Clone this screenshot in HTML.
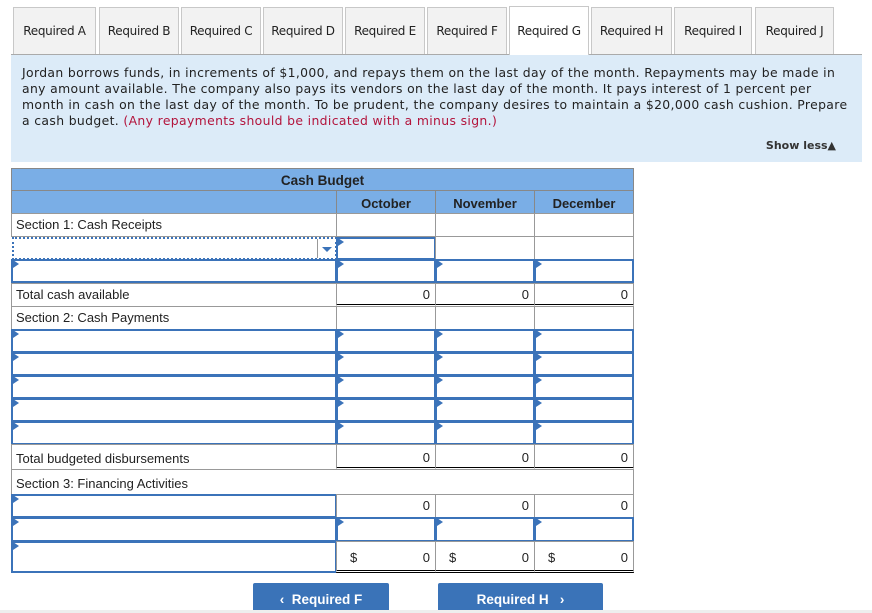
<!DOCTYPE html>
<html><head><style>
body{margin:0;width:872px;height:613px;background:#fff;font-family:"Liberation Sans",Arial,sans-serif;position:relative;overflow:hidden}
.tab{position:absolute;top:7px;height:47px;background:#f2f2f2;border:1px solid #c8c8c8;border-bottom:none;box-sizing:border-box;font-family:"DejaVu Sans",Verdana,sans-serif;font-size:12px;color:#222;display:flex;align-items:center;justify-content:center;letter-spacing:-0.3px}
.tab.act{background:#fff;top:6px;height:49px;z-index:2}
.tabline{position:absolute;left:11px;top:54px;width:851px;height:1px;background:#aaa}
.info{position:absolute;left:11px;top:55px;width:851px;height:107px;background:#dcebf8;box-sizing:border-box;padding:10px 10px 10px 11px;font-family:"DejaVu Sans",Verdana,sans-serif;font-size:12.4px;letter-spacing:0.36px;line-height:16px;color:#222}
.info .red{color:#b3143c}
.show{position:absolute;right:36px;top:139px;font-family:"DejaVu Sans",Verdana,sans-serif;font-size:11px;font-weight:bold;color:#333}
.c{position:absolute;box-sizing:border-box;font-size:13px;color:#222}
.hd{background:#7aaee6;border:1px solid #888}
.g{border:1px solid #999;background:#fff}
.in{border:2px solid #3b73b9;background:#fff}
.in:before{content:"";position:absolute;left:0;top:0;border-left:6px solid #3b73b9;border-top:4px solid transparent;border-bottom:4px solid transparent;margin-top:-1px}
.lbl{padding:3px 4px}
.num{text-align:right;padding:3px 5px}
.dbl{border-bottom:3px double #000}
.btn{position:absolute;top:583px;height:30px;background:#3a73b8;color:#fff;font-weight:bold;font-size:13.5px;border-radius:2px 2px 0 0;display:flex;align-items:center;justify-content:center;padding-top:3px;box-sizing:border-box}
</style></head><body>
<div class="tab" style="left:13px;width:83px">Required A</div>
<div class="tab" style="left:99px;width:80px">Required B</div>
<div class="tab" style="left:181px;width:80px">Required C</div>
<div class="tab" style="left:263px;width:80px">Required D</div>
<div class="tab" style="left:345px;width:80px">Required E</div>
<div class="tab" style="left:427px;width:80px">Required F</div>
<div class="tab act" style="left:509px;width:80px">Required G</div>
<div class="tab" style="left:591px;width:81px">Required H</div>
<div class="tab" style="left:674px;width:78px">Required I</div>
<div class="tab" style="left:755px;width:79px">Required J</div>
<div class="tabline"></div>
<div class="info">Jordan borrows funds, in increments of $1,000, and repays them on the last day of the month. Repayments may be made in any amount available. The company also pays its vendors on the last day of the month. It pays interest of 1 percent per month in cash on the last day of the month. To be prudent, the company desires to maintain a $20,000 cash cushion. Prepare a cash budget. <span class="red">(Any repayments should be indicated with a minus sign.)</span></div>
<div class="show">Show less▲</div>

<div class="c hd" style="left:11px;top:168px;width:623px;height:23px;text-align:center;font-weight:bold;padding-top:4px;font-size:13.5px">Cash Budget</div>
<div class="c hd" style="left:11px;top:190px;width:326px;height:24px"></div>
<div class="c hd" style="left:336px;top:190px;width:100px;height:24px;text-align:center;font-weight:bold;padding-top:5px">October</div>
<div class="c hd" style="left:435px;top:190px;width:100px;height:24px;text-align:center;font-weight:bold;padding-top:5px">November</div>
<div class="c hd" style="left:534px;top:190px;width:100px;height:24px;text-align:center;font-weight:bold;padding-top:5px">December</div>

<div class="c g lbl" style="left:11px;top:213px;width:326px;height:24px">Section 1: Cash Receipts</div>
<div class="c g" style="left:336px;top:213px;width:100px;height:24px"></div><div class="c g" style="left:435px;top:213px;width:100px;height:24px"></div><div class="c g" style="left:534px;top:213px;width:100px;height:24px"></div>

<div class="c" style="left:12px;top:237px;width:325px;height:23px;border:2px dotted #3b73b9"><div style="position:absolute;right:0;top:0;width:17px;height:19px;border-left:1px solid #999"><div style="position:absolute;left:4px;top:8px;border-top:5px solid #3b73b9;border-left:5px solid transparent;border-right:5px solid transparent"></div></div></div>
<div class="c in" style="left:336px;top:237px;width:100px;height:23px"></div><div class="c g" style="left:435px;top:236px;width:100px;height:24px"></div><div class="c g" style="left:534px;top:236px;width:100px;height:24px"></div>

<div class="c in" style="left:11px;top:259px;width:326px;height:24px"></div><div class="c in" style="left:336px;top:259px;width:100px;height:24px"></div><div class="c in" style="left:435px;top:259px;width:100px;height:24px"></div><div class="c in" style="left:534px;top:259px;width:100px;height:24px"></div>

<div class="c g lbl" style="left:11px;top:283px;width:326px;height:24px">Total cash available</div>
<div class="c g num dbl" style="left:336px;top:283px;width:100px;height:24px">0</div><div class="c g num dbl" style="left:435px;top:283px;width:100px;height:24px">0</div><div class="c g num dbl" style="left:534px;top:283px;width:100px;height:24px">0</div>

<div class="c g lbl" style="left:11px;top:306px;width:326px;height:24px">Section 2: Cash Payments</div>
<div class="c g" style="left:336px;top:306px;width:100px;height:24px"></div><div class="c g" style="left:435px;top:306px;width:100px;height:24px"></div><div class="c g" style="left:534px;top:306px;width:100px;height:24px"></div>

<div class="c in" style="left:11px;top:329px;width:326px;height:24px"></div><div class="c in" style="left:336px;top:329px;width:100px;height:24px"></div><div class="c in" style="left:435px;top:329px;width:100px;height:24px"></div><div class="c in" style="left:534px;top:329px;width:100px;height:24px"></div>
<div class="c in" style="left:11px;top:352px;width:326px;height:24px"></div><div class="c in" style="left:336px;top:352px;width:100px;height:24px"></div><div class="c in" style="left:435px;top:352px;width:100px;height:24px"></div><div class="c in" style="left:534px;top:352px;width:100px;height:24px"></div>
<div class="c in" style="left:11px;top:375px;width:326px;height:24px"></div><div class="c in" style="left:336px;top:375px;width:100px;height:24px"></div><div class="c in" style="left:435px;top:375px;width:100px;height:24px"></div><div class="c in" style="left:534px;top:375px;width:100px;height:24px"></div>
<div class="c in" style="left:11px;top:398px;width:326px;height:24px"></div><div class="c in" style="left:336px;top:398px;width:100px;height:24px"></div><div class="c in" style="left:435px;top:398px;width:100px;height:24px"></div><div class="c in" style="left:534px;top:398px;width:100px;height:24px"></div>
<div class="c in" style="left:11px;top:421px;width:326px;height:24px"></div><div class="c in" style="left:336px;top:421px;width:100px;height:24px"></div><div class="c in" style="left:435px;top:421px;width:100px;height:24px"></div><div class="c in" style="left:534px;top:421px;width:100px;height:24px"></div>

<div class="c g lbl" style="left:11px;top:444px;width:326px;height:26px;padding-top:6px">Total budgeted disbursements</div>
<div class="c g num dbl" style="left:336px;top:444px;width:100px;height:26px;padding-top:5px">0</div><div class="c g num dbl" style="left:435px;top:444px;width:100px;height:26px;padding-top:5px">0</div><div class="c g num dbl" style="left:534px;top:444px;width:100px;height:26px;padding-top:5px">0</div>

<div class="c g lbl" style="left:11px;top:469px;width:623px;height:26px;padding-top:6px">Section 3: Financing Activities</div>

<div class="c in" style="left:11px;top:494px;width:326px;height:24px"></div>
<div class="c g num" style="left:336px;top:494px;width:100px;height:24px">0</div><div class="c g num" style="left:435px;top:494px;width:100px;height:24px">0</div><div class="c g num" style="left:534px;top:494px;width:100px;height:24px">0</div>

<div class="c in" style="left:11px;top:517px;width:326px;height:25px"></div><div class="c in" style="left:336px;top:517px;width:100px;height:25px"></div><div class="c in" style="left:435px;top:517px;width:100px;height:25px"></div><div class="c in" style="left:534px;top:517px;width:100px;height:25px"></div>

<div class="c in" style="left:11px;top:541px;width:326px;height:32px"></div>
<div class="c g num dbl" style="left:336px;top:541px;width:100px;height:32px;padding-top:8px"><span style="float:left;padding-left:8px">$</span>0</div>
<div class="c g num dbl" style="left:435px;top:541px;width:100px;height:32px;padding-top:8px"><span style="float:left;padding-left:8px">$</span>0</div>
<div class="c g num dbl" style="left:534px;top:541px;width:100px;height:32px;padding-top:8px"><span style="float:left;padding-left:8px">$</span>0</div>

<div class="btn" style="left:253px;width:136px">‹&nbsp;&nbsp;Required F</div>
<div class="btn" style="left:438px;width:165px">Required H&nbsp;&nbsp;&nbsp;›</div>
<div style="position:absolute;left:0;top:610px;width:872px;height:3px;background:#eee"></div>
</body></html>
